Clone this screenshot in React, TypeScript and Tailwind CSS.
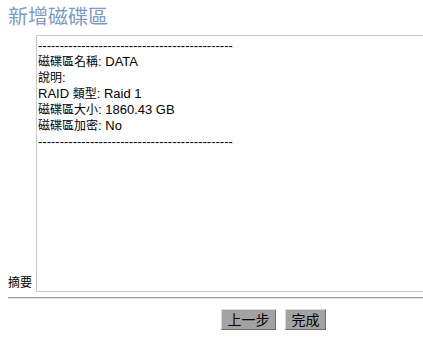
import React from "react";

const dashes = "---------------------------------------------";

function C({ children }: { children: React.ReactNode }) {
  return <span className="text-[12px]">{children}</span>;
}

export default function App() {
  const lines: React.ReactNode[] = [
    dashes,
    <>
      <C>磁碟區名稱</C>: DATA
    </>,
    <>
      <C>說明</C>:
    </>,
    <>
      RAID <C>類型</C>: Raid 1
    </>,
    <>
      <C>磁碟區大小</C>: 1860.43 GB
    </>,
    <>
      <C>磁碟區加密</C>: No
    </>,
    dashes,
  ];
  return (
    <div className="w-[423px] h-[343px] overflow-hidden bg-white" style={{ fontFamily: '"Liberation Sans", "Noto Sans CJK TC", sans-serif' }}>
      <div className="pl-[8px] pt-[2px] text-[20px] leading-[28px] text-[#7b9bc6]" style={{ fontFamily: '"Noto Sans CJK TC", serif' }}>
        新增磁碟區
      </div>
      <div className="flex items-end mt-[5px] pl-[8px] w-[460px]">
        <div className="w-[28px] text-[12px] leading-[16px] text-black mb-[1px]">摘要</div>
        <div className="flex-1 h-[257px] border border-[#c8c8c8] pl-[1px] pt-[2px] text-[13px] leading-[16px] text-black">
          {lines.map((l, i) => (
            <div key={i} className="whitespace-pre">{l}</div>
          ))}
        </div>
      </div>
      <div className="ml-[8px] mt-[5px] h-[2px] border-t border-t-[#9a9a9a] border-b border-b-[#e6e6e6]"></div>
      <div className="flex gap-[9px] pl-[221px] mt-[10px]">
        <button className="w-[55px] h-[21px] bg-[#a3a3a3] border border-t-[#d8d8d8] border-l-[#d8d8d8] border-r-[#6a6a6a] border-b-[#6a6a6a] text-[14px] leading-[18px] text-black">
          上一步
        </button>
        <button className="w-[41px] h-[21px] bg-[#a3a3a3] border border-t-[#d8d8d8] border-l-[#d8d8d8] border-r-[#6a6a6a] border-b-[#6a6a6a] text-[14px] leading-[18px] text-black">
          完成
        </button>
      </div>
    </div>
  );
}
